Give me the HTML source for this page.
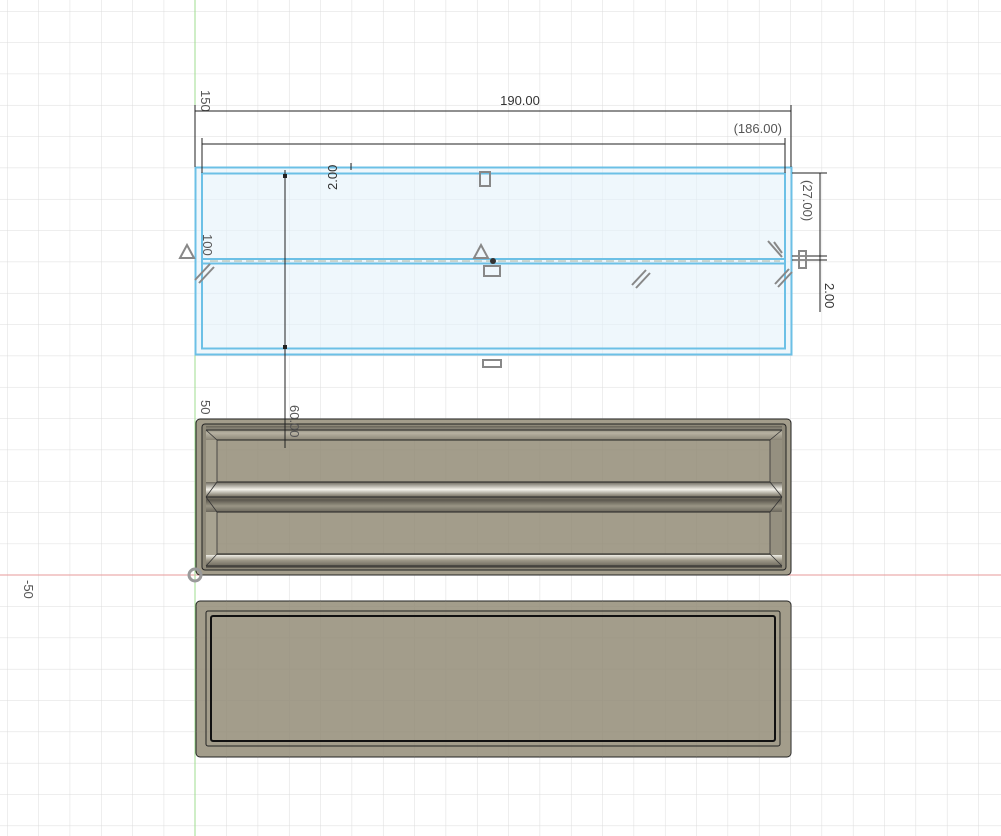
<!DOCTYPE html>
<html><head><meta charset="utf-8"><style>
html,body{margin:0;padding:0;background:#fff;}
svg{display:block;font-family:"Liberation Sans",sans-serif;}
</style></head><body>
<svg width="1001" height="836" viewBox="0 0 1001 836" xmlns="http://www.w3.org/2000/svg">
<defs>
<pattern id="g" x="195" y="11" width="31.33" height="31.33" patternUnits="userSpaceOnUse">
<path d="M0 0V31.33M0 0H31.33" stroke="#dcdcdc" stroke-width="1" fill="none"/>
</pattern>
<pattern id="gd" x="195" y="11" width="31.33" height="31.33" patternUnits="userSpaceOnUse">
<path d="M0 0V31.33M0 0H31.33" stroke="#958f7e" stroke-width="1" fill="none"/>
</pattern>
<linearGradient id="rib" x1="0" y1="0" x2="0" y2="1">
<stop offset="0" stop-color="#6b675c"/><stop offset="0.25" stop-color="#f4f2ea"/><stop offset="0.45" stop-color="#8a8576"/><stop offset="0.6" stop-color="#5c584e"/><stop offset="0.8" stop-color="#9a9585"/><stop offset="1" stop-color="#6b675c"/>
</linearGradient>
<linearGradient id="wallT" x1="0" y1="0" x2="0" y2="1">
<stop offset="0" stop-color="#6a665a"/><stop offset="0.5" stop-color="#b7b2a2"/><stop offset="1" stop-color="#8a8576"/>
</linearGradient>
<linearGradient id="wallB" x1="0" y1="0" x2="0" y2="1">
<stop offset="0" stop-color="#f0eee6"/><stop offset="0.4" stop-color="#9e9988"/><stop offset="1" stop-color="#5e5a50"/>
</linearGradient>
</defs>
<rect width="1001" height="836" fill="url(#g)"/>
<line x1="0" y1="575" x2="1001" y2="575" stroke="#e79a9a" stroke-width="1"/>
<line x1="195" y1="0" x2="195" y2="836" stroke="#9fdc8f" stroke-width="1"/>
<text transform="translate(201,90) rotate(90)" font-size="13" fill="#555">150</text>
<text transform="translate(201,400) rotate(90)" font-size="13" fill="#555">50</text>
<text transform="translate(24,580) rotate(90)" font-size="13" fill="#555">-50</text>

<!-- body 1 -->
<rect x="196" y="419" width="595" height="156" rx="4" fill="#a39d8b" stroke="#222" stroke-width="1"/>
<rect x="202" y="424" width="584" height="146" rx="3" fill="#8e8979" stroke="#222" stroke-width="1"/>
<rect x="206" y="426" width="576" height="14" fill="url(#wallT)"/>
<rect x="206" y="555" width="576" height="13" fill="url(#wallB)"/>
<rect x="206" y="440" width="11" height="115" fill="#a8a391"/>
<rect x="770" y="440" width="12" height="115" fill="#959080"/>
<rect x="217" y="440" width="553" height="42" fill="#a39d8b"/>
<rect x="217" y="512" width="553" height="42" fill="#a39d8b"/>
<rect x="206" y="482" width="576" height="30" fill="url(#rib)"/>
<rect x="217" y="440" width="553" height="42" fill="url(#gd)" opacity="0.4"/>
<rect x="217" y="512" width="553" height="42" fill="url(#gd)" opacity="0.4"/>
<path d="M217 440H770M217 482H770M217 512H770M217 554H770M206 497H782M206 430H782M206 566H782" stroke="#222" stroke-width="1" fill="none"/>
<path d="M206 430L217 440M782 430L770 440M206 566L217 554M782 566L770 554M206 497L217 482M206 497L217 512M782 497L770 482M782 497L770 512M217 440V482M217 512V554M770 440V482M770 512V554" stroke="#333" stroke-width="0.8" fill="none"/>
<circle cx="195" cy="575" r="6" fill="none" stroke="#999" stroke-width="3"/>

<!-- body 2 -->
<rect x="196" y="601" width="595" height="156" rx="4" fill="#a39d8b" stroke="#222" stroke-width="1"/>
<rect x="196" y="601" width="595" height="156" rx="4" fill="url(#gd)" opacity="0.35"/>
<rect x="206" y="611" width="574" height="135" rx="2" fill="none" stroke="#222" stroke-width="1"/>
<rect x="211" y="616" width="564" height="125" rx="2" fill="none" stroke="#111" stroke-width="2"/>

<!-- sketch -->
<rect x="195.5" y="167.5" width="596" height="187" fill="#e4f1fa" fill-opacity="0.6" stroke="#6cc0e6" stroke-width="2"/>
<rect x="202" y="173.5" width="583" height="175" fill="none" stroke="#6cc0e6" stroke-width="2"/>
<path d="M202 259H785M202 263.5H785" stroke="#6cc0e6" stroke-width="2"/>
<path d="M210 261H780" stroke="#a8b8a8" stroke-width="1" stroke-dasharray="8 4"/>
<!-- dimensions -->
<path d="M195 105V167M791 105V167M195 111H791M202 138V173M785 138V173M202 144H785" stroke="#222" stroke-width="1"/>
<text x="520" y="105" font-size="13" fill="#333" text-anchor="middle">190.00</text>
<text x="782" y="133" font-size="13" fill="#555" text-anchor="end">(186.00)</text>
<path d="M285 170V448M792 173H827M792 260H827M792 256H827M820 173V260M820 256V312" stroke="#222" stroke-width="1"/>
<rect x="283" y="174" width="4" height="4" fill="#222"/><rect x="283" y="345" width="4" height="4" fill="#222"/>
<path d="M351 163V170" stroke="#222"/>
<text transform="translate(290,405) rotate(90)" font-size="13" fill="#555">60.00</text>
<text transform="translate(337,190) rotate(-90)" font-size="13" fill="#333">2.00</text>
<text transform="translate(803,180) rotate(90)" font-size="13" fill="#555">(27.00)</text>
<text transform="translate(825,283) rotate(90)" font-size="13" fill="#333">2.00</text>
<text transform="translate(203,234) rotate(90)" font-size="13" fill="#555">100</text>
<!-- constraint glyphs -->
<g stroke="#888" fill="none" stroke-width="2">
<path d="M180 258L187 245L194 258Z M474 258L481 245L488 258Z"/>
<path d="M195 280L210 264M199 283L214 267M632 285L646 270M636 288L650 273M775 284L789 269M778 287L792 272M768 241L782 257M774 242L782 253"/>
<rect x="480" y="172" width="10" height="14"/><rect x="484" y="266" width="16" height="10"/><rect x="483" y="360" width="18" height="7"/><rect x="799" y="251" width="7" height="17"/>
</g>
<circle cx="493" cy="261" r="3" fill="#333"/>
</svg>
</body></html>
